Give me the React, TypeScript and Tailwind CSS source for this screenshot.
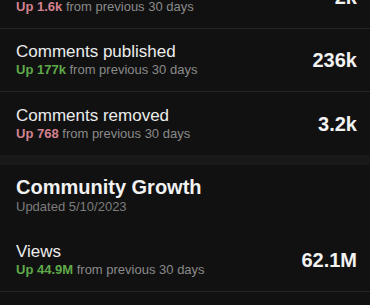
const font = { fontFamily: '"Liberation Sans", Arial, sans-serif' };

type Stat = {
  title: string;
  change: string;
  up: "good" | "bad";
  value: string;
};

function StatRow({ stat, divider = true }: { stat: Stat; divider?: boolean }) {
  return (
    <div className={`flex items-center justify-between h-[63px] pl-4 pr-[13px] ${divider ? "border-b border-[#262626]" : ""}`}>
      <div className="flex flex-col">
        <span className="text-[17px] leading-[20px] text-[#ececec]">{stat.title}</span>
        <span className="text-[13px] leading-[16px] text-[#8a8a8a]">
          <span className={`font-bold ${stat.up === "good" ? "text-[#5fa94a]" : "text-[#d4828f]"}`}>{stat.change}</span>{" "}
          from previous 30 days
        </span>
      </div>
      <span className="text-[20px] font-bold text-[#f2f2f2]">{stat.value}</span>
    </div>
  );
}

export default function App() {
  const engagement: Stat[] = [
    { title: "Comments", change: "Up 1.6k", up: "bad", value: "2k" },
    { title: "Comments published", change: "Up 177k", up: "good", value: "236k" },
    { title: "Comments removed", change: "Up 768", up: "bad", value: "3.2k" },
  ];

  return (
    <div className="w-[370px] h-[305px] overflow-hidden bg-[#111111]" style={font}>
      <div className="-mt-[34px]">
        {engagement.map((s, i) => (
          <StatRow key={s.title} stat={s} divider={i < engagement.length - 1} />
        ))}
      </div>
      <div className="h-[10px] bg-[#191919]" />
      <div className="pt-[10px]">
        <div className="pl-4 pb-[14px]">
          <h2 className="text-[20px] leading-[24px] font-bold text-[#f2f2f2]">Community Growth</h2>
          <p className="text-[13px] leading-[16px] text-[#7c7c7c]">Updated 5/10/2023</p>
        </div>
        <StatRow stat={{ title: "Views", change: "Up 44.9M", up: "good", value: "62.1M" }} />
      </div>
    </div>
  );
}
